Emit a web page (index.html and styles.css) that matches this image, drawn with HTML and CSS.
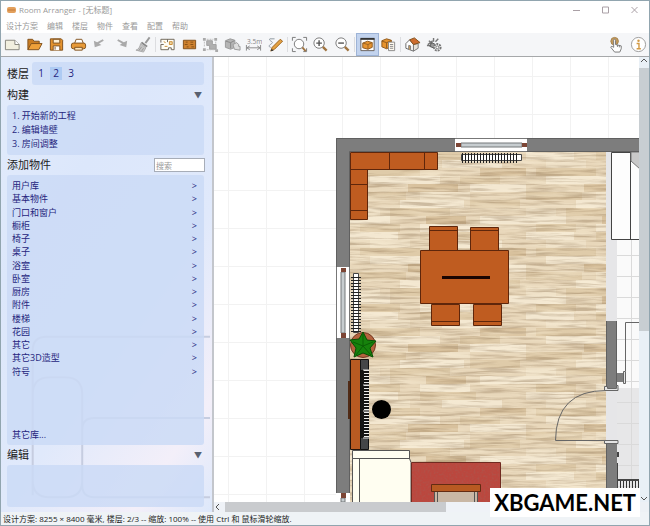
FILE: index.html
```html
<!DOCTYPE html>
<html lang="zh-CN">
<head>
<meta charset="utf-8">
<meta name="viewport" content="width=device-width, initial-scale=1">
<title>Room Arranger - [无标题]</title>
<link rel="stylesheet" href="styles.css">
</head>
<body>
<header class="titlebar">
  <svg class="app-icon" viewBox="0 0 10 8" aria-hidden="true"><rect x="0" y="1" width="9" height="6" rx="2" fill="#e3a05c"/><path d="M1 4h7" stroke="#c47a38"/></svg>
  <h1>Room Arranger - [无标题]</h1>
  <div class="window-buttons">
    <button aria-label="最小化"><svg viewBox="0 0 8 8"><path d="M0 4.500h7"/></svg></button>
    <button aria-label="最大化"><svg viewBox="0 0 8 8"><path d="M.5 1h6v6h-6z"/></svg></button>
    <button aria-label="关闭"><svg viewBox="0 0 8 8"><path d="M.5 1l6 6M6.500 1l-6 6"/></svg></button>
  </div>
</header>
<nav class="menu">
  <button>设计方案</button><button>编辑</button><button>楼层</button><button>物件</button><button>查看</button><button>配置</button><button>帮助</button>
</nav>
<div class="toolbar" role="toolbar">
  <div class="group g7">
    <button aria-label="新建"><svg viewBox="0 0 18 18"><path d="M1.500 4.500h10l4.500 4.500v5.500H1.500z" fill="#f2efdf" stroke="#85837a"/><path d="M11.500 4.500V9H16" fill="#fff" stroke="#85837a"/></svg></button>
    <button aria-label="打开"><svg viewBox="0 0 18 18"><path d="M2 14.500V3.500h5l1.500 2H14V8" fill="#c97c22" stroke="#80501c"/><path d="M2 14.500L5.500 8H17l-3.500 6.500z" fill="#eea03a" stroke="#80501c"/></svg></button>
    <button aria-label="保存"><svg viewBox="0 0 18 18"><path d="M2.500 3h11.500l1.500 1.500V15h-13z" fill="#e3922e" stroke="#80501c"/><path d="M5.500 3.500h7v4h-7z" fill="#fff0d4" stroke="#80501c"/><path d="M5.500 15v-4.500h7V15" fill="#fff" stroke="#80501c"/><path d="M7.500 11.500v3" stroke="#80501c"/></svg></button>
    <button aria-label="打印"><svg viewBox="0 0 18 18"><path d="M5 7.500L6.500 3.500h6L14 7.500" fill="#fff" stroke="#80501c"/><rect x="1.500" y="7.500" width="15" height="6" rx="2" fill="#e79a38" stroke="#80501c"/><path d="M5 12h8v3H5z" fill="#ffe7bd" stroke="#80501c"/></svg></button>
    <button aria-label="撤销"><svg viewBox="0 0 18 18"><path d="M3 5l1 7 7-2.500L8.500 8l5-3-1-1.500-6 3z" fill="#aaa"/></svg></button>
    <button aria-label="重做"><svg viewBox="0 0 18 18"><path d="M15 5l-1 7-7-2.500L9.500 8l-5-3 1-1.500 6 3z" fill="#aaa"/></svg></button>
    <button aria-label="格式刷"><svg viewBox="0 0 18 18"><path d="M15.500 1.500L11 7.500" stroke="#999" stroke-width="2"/><path d="M7.500 6l6 4.500-1.500 1.500-6-4.500z" fill="#888"/><path d="M6 8l5.500 4.500L9 17l-8-2c3-1 4-3 5-7z" fill="#c5c5c5" stroke="#aaa"/><path d="M4 15.500l3-4M7 16l2-3" stroke="#999"/></svg></button>
  </div>
  <span class="sep"></span>
  <div class="group g6">
    <button aria-label="平面图"><svg viewBox="0 0 18 18"><path d="M2 3.500h14v11h-3v-2h-3v2H2V9h3M2 7V3.500M9 3.500v3" fill="#fffdf5" stroke="#6d6557"/><path d="M11 6h3v3h-3zM6 11h3M5 6l2 1" fill="#f0d6a3" stroke="#c98c34"/></svg></button>
    <button aria-label="墙壁"><svg viewBox="0 0 18 18"><path d="M2.500 4.500h13v9h-13z" fill="#ce8230" stroke="#80501c"/><path d="M5 6.500h2m3 0h3M4 9h3m3 0h3m-7 2.500h2m3 0h3" stroke="#875015"/></svg></button>
    <button aria-label="组合"><svg viewBox="0 0 18 18"><path d="M5 5h6v4h4v5H8v-4H5z" fill="#b0b0b0" stroke="#a0a0a0"/><path d="M1 2h3v3H1zM13 2h3v3h-3zM1 13h3v3H1zM14 14h3v3h-3z" fill="#aaa"/><path d="M5 3.500h7M2.500 6v6M14.500 6v3M5 14.500h8" stroke="#bbb" stroke-dasharray="2 1"/></svg></button>
    <button aria-label="合并"><svg viewBox="0 0 18 18"><path d="M1.500 5l5-2 5 1.500V12L7 14l-5.500-2z" fill="#b5b5b5" stroke="#999"/><path d="M2 5.500L7 7l4-2M7 7v6" fill="none" stroke="#888"/><path d="M9.500 9l4-2 2 2v2h1.500v4L11 14z" fill="#ddd" stroke="#999"/></svg></button>
    <button aria-label="测量"><svg viewBox="0 0 18 18"><text class="measure" x="2" y="8">3.5m</text><path d="M1.500 9.500v6M16.500 9.500v6M2 12.500h14M5 10.500l-3 2 3 2M13 10.500l3 2-3 2" fill="none" stroke="#888"/></svg></button>
    <button aria-label="画笔"><svg viewBox="0 0 18 18"><path d="M8 3H3c-2 2 5 3 2 5s-4 3-1 4" fill="none" stroke="#8a949c"/><path d="M14 3.500l2.500 2L8 14l-4 2 1.500-4z" fill="#e5a244" stroke="#9b6421"/><path d="M4 16l3-.5-2-2z" fill="#333"/></svg></button>
  </div>
  <span class="sep"></span>
  <div class="group g3">
    <button aria-label="全部显示"><svg viewBox="0 0 18 18"><path d="M1.500 5V1.500H5M13 1.500h3.500V5M1.500 13v3.500H5M16.500 13v3.500H13" fill="none" stroke="#777"/><circle cx="8.500" cy="8.500" r="5" fill="#fff" stroke="#777"/><path d="M12 12l3.500 4" stroke="#a07440" stroke-width="2"/></svg></button>
    <button aria-label="放大"><svg viewBox="0 0 18 18"><circle cx="7.500" cy="7.500" r="5.500" fill="#fff" stroke="#777"/><path d="M4.500 7.500h6M7.500 4.500v6" stroke="#555" stroke-width="1.500"/><path d="M11.500 11.500l4 4" stroke="#a07440" stroke-width="2.500"/></svg></button>
    <button aria-label="缩小"><svg viewBox="0 0 18 18"><circle cx="7.500" cy="7.500" r="5.500" fill="#fff" stroke="#777"/><path d="M4.500 7.500h6" stroke="#555" stroke-width="1.500"/><path d="M11.500 11.500l4 4" stroke="#a07440" stroke-width="2.500"/></svg></button>
  </div>
  <span class="sep"></span>
  <div class="group g2">
    <button class="active" aria-label="物件面板" aria-pressed="true"><svg viewBox="0 0 18 18"><path d="M2 3h14v12.500H2z" fill="#fff" stroke="#66605a"/><path d="M1.500 3h15" stroke="#333" stroke-width="2"/><path d="M4 7.500l5-2 5 1.500v5L9.500 14 4 12.500z" fill="#e8942e" stroke="#8c571c"/><path d="M4 7.500l5.500 1.500L14 7M9.500 9v5" fill="none" stroke="#9b6421"/></svg></button>
    <button aria-label="物件列表"><svg viewBox="0 0 18 18"><path d="M2 5l5-2 5 1.500V11l-5 2.500-5-2z" fill="#e8942e" stroke="#8c571c"/><path d="M2 5.500L7 7l5-2M7 7v6" fill="none" stroke="#8c571c"/><path d="M9 6.500h6.500v9H9z" fill="#fffaf0" stroke="#888"/><path d="M10.500 9H14M10.500 11H14M10.500 13H14" stroke="#888"/></svg></button>
  </div>
  <span class="sep"></span>
  <div class="group g2">
    <button aria-label="三维视图"><svg viewBox="0 0 18 18"><path d="M2 8l4-4 4 5v7l-8-3z" fill="#fff" stroke="#666"/><path d="M10 9l5-1v5l-5 3z" fill="#e7e2d9" stroke="#777"/><path d="M6 4l5-2 6 5-7 2z" fill="#ce6c2e" stroke="#80501c"/><path d="M5 14v-4l2 .5v4" fill="#d6a45f" stroke="#777"/></svg></button>
    <button aria-label="三维设置"><svg viewBox="0 0 18 18"><path d="M2 9l5-4M1 10h6M8 6V2M10 6l3-3M3 5l4 3" stroke="#777" stroke-width="1.500"/><path d="M6 7l4 2-1 4-5-2z" fill="#999" stroke="#555"/><circle cx="12" cy="12" r="3.500" fill="#eee" stroke="#777" stroke-width="2" stroke-dasharray="2 1"/><circle cx="12" cy="12" r="1.500" fill="#fff" stroke="#777"/></svg></button>
  </div>
  <div class="group g2 help">
    <button aria-label="触摸"><svg viewBox="0 0 18 18"><circle cx="7" cy="5.500" r="4" fill="#c39a5c" stroke="#a5824d"/><path d="M6 12V4.500c0-1.500 2-1.500 2 0V9l6 1.500v3L12.500 17H7l-4-5c0-1.500 2-1 3 0z" fill="#fff" stroke="#777"/><path d="M10 9.500v2M12 10v2" stroke="#777"/></svg></button>
    <button aria-label="信息"><svg viewBox="0 0 18 18"><circle cx="9" cy="9" r="7.500" fill="#fff" stroke="#9a9a9a"/><circle cx="9" cy="5" r="1.300" fill="#d39a45"/><path d="M7 8h2.500v5M7 13.500h4.500" fill="none" stroke="#d39a45" stroke-width="1.500"/></svg></button>
  </div>
</div>
<main>
  <aside>
    <svg class="decor" viewBox="0 0 213 190" aria-hidden="true"><path d="M32 174V28q0-14 14-14h165M32 72q0-17 17-17h16q17 0 17 17v87q0 17-17 17H49q-17 0-17-17zM211 96H94q-12 0-12 12v56q0 12 12 12h117"/></svg>
    <section class="floors">
      <h2>楼层</h2>
      <div class="box floor-list"><button>1</button><button class="selected">2</button><button>3</button></div>
    </section>
    <div class="heading"><h2>构建</h2><button aria-label="折叠构建">▼</button></div>
    <ol class="box steps">
      <li><button>1. 开始新的工程</button></li>
      <li><button>2. 编辑墙壁</button></li>
      <li><button>3. 房间调整</button></li>
    </ol>
    <div class="heading search"><h2><label for="search">添加物件</label></h2><input id="search" type="text" placeholder="搜索"></div>
    <div class="box library">
      <ul>
        <li><button>用户库<span>&gt;</span></button></li>
        <li><button>基本物件<span>&gt;</span></button></li>
        <li><button>门口和窗户<span>&gt;</span></button></li>
        <li><button>橱柜<span>&gt;</span></button></li>
        <li><button>椅子<span>&gt;</span></button></li>
        <li><button>桌子<span>&gt;</span></button></li>
        <li><button>浴室<span>&gt;</span></button></li>
        <li><button>卧室<span>&gt;</span></button></li>
        <li><button>厨房<span>&gt;</span></button></li>
        <li><button>附件<span>&gt;</span></button></li>
        <li><button>楼梯<span>&gt;</span></button></li>
        <li><button>花园<span>&gt;</span></button></li>
        <li><button>其它<span>&gt;</span></button></li>
        <li><button>其它3D造型<span>&gt;</span></button></li>
        <li><button>符号<span>&gt;</span></button></li>
      </ul>
      <button>其它库...</button>
    </div>
    <div class="heading"><h2>编辑</h2><button aria-label="折叠编辑">▼</button></div>
    <div class="box edit"></div>
  </aside>
  <div class="workspace">
    <svg class="plan" role="img" aria-label="平面图">
      <defs>
        <pattern id="grid" x="228" y="152" width="38" height="38" patternUnits="userSpaceOnUse"><path d="M0 .5h38M.5 0v38" stroke="#f2f2f2"/></pattern>
        <pattern id="tiles" x="631" y="255" width="21" height="21" patternUnits="userSpaceOnUse"><path d="M0 .5h21M.5 0v21" stroke="#dadada"/></pattern>
        <pattern id="planks" x="350" y="152" width="176" height="80" patternUnits="userSpaceOnUse">
          <rect width="176" height="80" fill="#e8d7ba"/>
          <path d="M0 0h48v8H0zM92 8h60v8H92zM20 24h70v8H20zM120 32h56v8h-56zM50 48h64v8H50zM0 64h40v8H0zM130 64h46v8h-46zM70 72h50v8H70z" fill="#f3e7d0"/>
          <path d="M70 0h56v8H70zM10 16h60v8H10zM110 24h40v8h-40zM0 40h56v8H0zM120 48h50v8h-50zM40 56h60v8H40zM10 72h40v8H10z" fill="#dfcba9"/>
          <path d="M130 16h46v8h-46zM58 32h50v8H58zM76 64h40v8H76z" fill="#d8c19d"/>
          <path d="M20 8h40v8H20zM70 40h50v8H70zM0 56h30v8H0z" fill="#eee0c6"/>
        </pattern>
        <filter id="grain" x="0" y="0" width="100%" height="100%" color-interpolation-filters="sRGB">
          <feTurbulence type="fractalNoise" baseFrequency="0.025 0.35" numOctaves="3" seed="7"/>
          <feColorMatrix values="0 0 0 0 .52  0 0 0 0 .41  0 0 0 0 .28  3 0 0 0 -1.300"/>
        </filter>
        <filter id="light" x="0" y="0" width="100%" height="100%" color-interpolation-filters="sRGB">
          <feTurbulence type="fractalNoise" baseFrequency="0.015 0.2" numOctaves="2" seed="21"/>
          <feColorMatrix values="0 0 0 0 .99  0 0 0 0 .95  0 0 0 0 .86  3 0 0 0 -1.300"/>
        </filter>
        <filter id="pile" x="0" y="0" width="100%" height="100%">
          <feTurbulence type="fractalNoise" baseFrequency="0.5" numOctaves="2" seed="3"/>
          <feColorMatrix values="0 0 0 0 .4  0 0 0 0 .1  0 0 0 0 .08  3 0 0 0 -1.300"/>
        </filter>
        <pattern id="fins" x="462" width="3" height="10" patternUnits="userSpaceOnUse"><path d="M.5 0v10" stroke="#222"/></pattern>
        <pattern id="fins-side" y="277" width="10" height="3" patternUnits="userSpaceOnUse"><path d="M0 .5h10" stroke="#222"/></pattern>
        <pattern id="keys" y="370" width="9" height="3" patternUnits="userSpaceOnUse"><path d="M0 .5h9" stroke="#eee"/></pattern>
      </defs>
      <g transform="translate(-214 -57)">
        <rect x="214" y="57" width="2000" height="2000" fill="url(#grid)"/>
        <!-- adjoining kitchen -->
        <rect x="606" y="152" width="34" height="350" fill="#fafafa"/>
        <rect x="617" y="388" width="23" height="114" fill="#e7e7e8"/>
        <rect x="617" y="240" width="23" height="262" fill="url(#tiles)"/>
        <rect x="606" y="152" width="11" height="350" fill="#e6e6e8"/>
        <path d="M611.500 152.500H640v87h-28.500zM630.500 152v87" fill="#fdfdfd" stroke="#444"/>
        <path d="M631 152h9v17l-9-8z" fill="#c9c9c9" stroke="#777"/>
        <!-- living room floor -->
        <rect x="350" y="152" width="256" height="350" fill="url(#planks)"/>
        <rect x="350" y="152" width="256" height="350" filter="url(#light)" opacity=".4"/>
        <rect x="350" y="152" width="256" height="350" filter="url(#grain)" opacity=".35"/>
        <!-- walls -->
        <path d="M336 138h304v14H350v350h-14zM606 321h11v67h-11zM606 442h11v60h-11zM617 373h8v9h-8z" fill="#7d7d7d"/>
        <path d="M336.500 502V138.500H640M349.500 502V151.500H640M606.500 321v67M616.500 321v67M606.500 442v60" fill="none" stroke="#606060"/>
        <!-- windows -->
        <path d="M455 138h72v14h-72zM336 267h14v71h-14zM336 493h14v9h-14z" fill="#fff"/>
        <path d="M455 138.500h72M455 151.500h72M336.500 267v71M349.500 267v71" stroke="#777"/>
        <path d="M461 143h61v4h-61zM341 272h4v61h-4zM341 498h4v4h-4z" fill="#c7cdd0" stroke="#75797b"/>
        <path d="M456 143h5v4h-5zM522 143h5v4h-5zM341 268h5v4h-5zM341 333h5v5h-5zM341 493h5v5h-5z" fill="#7c4535"/>
        <!-- radiators -->
        <path d="M461.500 154.500h60v6h-60z" fill="#fff" stroke="#444"/><rect x="462" y="153" width="56" height="10" fill="url(#fins)"/>
        <path d="M353.500 273.500h5v59h-5z" fill="#fff" stroke="#444"/><rect x="351" y="277" width="10" height="56" fill="url(#fins-side)"/>
        <!-- shelves, chairs and dining table -->
        <g fill="#bf5c20" stroke="#5e260b">
          <path d="M350.500 152.500h87v17h-70v50h-17zM389.500 152v17M424.500 152v17M350 169.500h18M350 184.500h18M350 210.500h18"/>
          <path d="M429.500 226.500h28v24h-28zM429 230.500h28M470.500 227.500h28v24h-28zM470 230.500h28M431.500 304.500h28v21h-28zM431 321.500h28M473.500 304.500h28v21h-28zM473 321.500h28"/>
          <path d="M420.500 250.500h88v53h-88z"/>
        </g>
        <path d="M442 276h48v3h-48z" fill="#190502"/>
        <!-- piano and stool -->
        <path d="M350.500 359.500h10v90h-10z" fill="#b95b22" stroke="#24140b"/>
        <path d="M348 381h2v38h-2z" fill="#512b16"/>
        <path d="M360.500 359.500h8v90h-8z" fill="#444648" stroke="#111"/>
        <path d="M361 370h7v68h-7z" fill="#151515"/><path d="M364 370h5v68h-5z" fill="url(#keys)"/>
        <path d="M363 370h6M363 385h6M363 411h6M363 438h6" stroke="#ddd"/>
        <circle cx="381.500" cy="409.500" r="9.500"/>
        <!-- plant -->
        <circle cx="363" cy="345" r="12.500" fill="#b4633e" stroke="#713721"/>
        <path d="M363 332l4 8 9 1-6 7 3 9-10-4-9 4 2-9-6-8 9-1z" fill="#16820c" stroke="#094e05"/>
        <path d="M363 346v-12M363 346l10-4M363 346l8 9M363 346l-7 9M363 346l-10-4" stroke="#0a5e05"/>
        <!-- sofa -->
        <path d="M352.500 458.500h57l1.500 4v44h-58.500zM352.500 450.500h57v8h-57zM359.500 459v43" fill="#fffef1" stroke="#555"/>
        <!-- rug and armchair -->
        <path d="M412 462h88v40h-88z" fill="#bb473e"/>
        <rect x="412" y="462" width="88" height="40" filter="url(#pile)" opacity=".5"/>
        <path d="M411.500 502v-39.500h89V502" fill="none" stroke="#702a20"/>
        <path d="M434 491h44v11h-44z" fill="#c9b7a5"/><path d="M434.500 491v11M437.500 491v11M474.500 491v11M477.500 491v11" stroke="#555"/>
        <path d="M431.500 484.500h49v7h-49z" fill="#b85a22" stroke="#632b12"/>
        <!-- doors and fittings -->
        <g fill="none" stroke="#666">
          <path d="M606 390.500q-50 0-50.500 50H606"/>
          <path d="M640 322.500h-14.500V371"/>
          <path d="M604.500 386.500h3v2h9v-3h1.500v5h-13.500zM604.500 440.500h13.500v3h-13.500zM623.500 371.500h2v12h-2z" fill="#e4e4e4"/>
        </g>
        <path d="M617 452h2v5h-2zM617 463h1v39h-1zM618 479h22v2h-22z" fill="#444"/>
        <path d="M620.500 481v21M623.500 481v21M626.500 481v21M629.500 481v21M632.500 481v21M635.500 481v21M638.500 481v21" stroke="#333"/>
      </g>
    </svg>
    <div class="scroll vertical" aria-hidden="true"><svg viewBox="0 0 8 8"><path d="M1 5l3-3 3 3"/></svg><span class="thumb"></span><svg class="end" viewBox="0 0 8 8"><path d="M1 3l3 3 3-3"/></svg></div>
    <div class="scroll horizontal" aria-hidden="true"><svg viewBox="0 0 8 8"><path d="M5 1L2 4l3 3"/></svg><span class="thumb"></span></div>
  </div>
</main>
<footer>设计方案: 8255 × 8400 毫米, 楼层: 2/3 -- 缩放: 100% -- 使用 Ctrl 和 鼠标滑轮缩放.</footer>
<div class="watermark">XBGAME.NET</div>
</body>
</html>
```
FILE: styles.css
```css
* { box-sizing: border-box; }
body {
  margin: 0;
  height: 100vh;
  display: flex;
  flex-direction: column;
  position: relative;
  overflow: hidden;
  border: 1px solid #91a5af;
  border-bottom: 0;
  background: #fff;
  color: #222;
  font-family: "Open Sans", "Noto Sans CJK SC", sans-serif;
  font-size: 9px;
}
button {
  border: 0;
  padding: 0;
  background: none;
  color: inherit;
  font: inherit;
  text-align: left;
}
h1, h2, ul, ol { margin: 0; padding: 0; font-weight: normal; list-style: none; }
svg { display: block; }

.titlebar { display: flex; align-items: center; height: 18px; padding-left: 6px; color: #999; }
.app-icon { width: 10px; height: 8px; margin-right: 2px; }
.titlebar h1 { font-size: 8px; line-height: 18px; }
.window-buttons { display: flex; gap: 21px; margin-left: auto; padding-right: 10px; }
.window-buttons svg { width: 8px; height: 8px; fill: none; stroke: #aaa0a6; }

.menu { display: flex; gap: 9px; height: 14px; padding-left: 5px; color: #9a9a9a; font-size: 8px; line-height: 14px; }

.toolbar { display: flex; height: 24px; padding-left: 1px; background: #f5f6f8; border-bottom: 1px solid #a6a8aa; }
.group { display: flex; }
.group button { flex: 1; display: flex; align-items: center; justify-content: center; }
.group svg { width: 17px; height: 17px; fill: none; }
.g7 { width: 152px; }
.g6 { width: 129px; }
.g3 { width: 64px; }
.g2 { width: 43px; }
.help { margin-left: auto; }
.sep { width: 1px; margin: 4px 1px; background: #dcdde0; }
.group .active { background: #c2d3ee; border: 1px solid #9db3d6; }
.measure { fill: #888; font-size: 7px; }

main { display: flex; flex: 1; min-height: 0; }
aside {
  position: relative;
  width: 213px;
  padding: 5px 8px 5px 6px;
  display: flex;
  flex-direction: column;
  border-right: 2px solid #c3c6cc;
  background: linear-gradient(125deg, #e3ecfb 0%, #dce7fb 30%, #e0e9fb 60%, #f3eff9 85%, #dde8fb 100%);
  color: #25257d;
}
.decor { position: absolute; left: 0; bottom: 0; width: 211px; height: 190px; fill: none; stroke: #c6cde0; stroke-width: 2; }
.box { position: relative; border-radius: 3px; background: rgba(202, 218, 246, .84); }
h2 { color: #222; font-size: 11px; line-height: 20px; }
.floors { display: flex; align-items: center; gap: 3px; }
.floor-list { flex: 1; display: flex; align-items: center; gap: 3px; height: 23px; padding-left: 3px; font-size: 10px; }
.floor-list button { width: 12px; line-height: 13px; text-align: center; }
.floor-list .selected { background: #aecbf3; }
.heading { position: relative; display: flex; align-items: center; justify-content: space-between; height: 20px; padding-right: 2px; }
.heading button { color: #596170; font-size: 8px; line-height: 12px; }
.steps { padding: 4px 5px; }
.steps li, .steps button { display: block; height: 14px; line-height: 14px; }
.search { margin-right: -1px; padding-right: 0; }
.search input {
  width: 51px;
  height: 14px;
  border: 1px solid #a7adb8;
  padding: 0 1px;
  background: #fff;
  font: 8px "Open Sans", "Noto Sans CJK SC", sans-serif;
}
.search input::placeholder { color: #999; }
.library { flex: 1; display: flex; flex-direction: column; justify-content: space-between; padding: 4px 7px 4px 5px; }
.library ul { display: flex; flex-direction: column; height: 199px; }
.library li { flex: 1; display: flex; }
.library li button { flex: 1; display: flex; justify-content: space-between; line-height: 13px; }
.library > button { line-height: 13px; }
.edit { height: 42px; }

.workspace { flex: 1; min-width: 0; display: grid; grid-template-columns: 1fr 10px; grid-template-rows: 1fr 10px; background: #edf1f5; }
.plan { width: 100%; height: 100%; min-height: 0; background: #fff; overflow: hidden; }
.scroll { display: flex; background: #e9f0f6; }
.scroll svg { width: 8px; height: 8px; fill: none; stroke: #555; }
.vertical { flex-direction: column; align-items: center; }
.vertical .thumb { width: 100%; height: 59%; margin-top: 3px; background: #c8ced2; }
.vertical .end { margin-top: auto; }
.horizontal { align-items: center; background: #eff2f7; }
.horizontal .thumb { width: 52%; height: 100%; margin-left: 3px; background: #c9cbce; }

footer { height: 14px; padding-left: 2px; background: #eff3f6; border-bottom: 1px solid #91a5af; font-size: 8px; line-height: 13px; white-space: nowrap; }
.watermark {
  position: absolute;
  right: 9px;
  bottom: 9px;
  padding: 0 4px;
  background: #fff;
  color: #000;
  font-family: Lato, sans-serif;
  font-size: 22px;
  font-weight: bold;
  line-height: 29px;
}
```
